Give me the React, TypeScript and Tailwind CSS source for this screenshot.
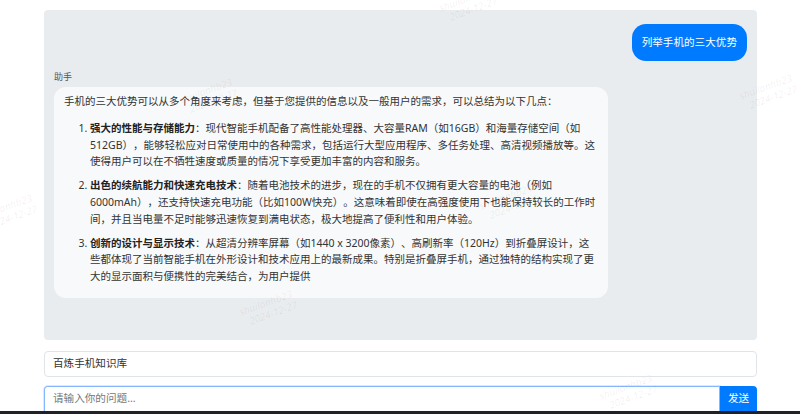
import React from 'react'

const FONT = '"Noto Sans", "Noto Sans CJK SC", sans-serif'

const ITEMS = [
  {
    title: '强大的性能与存储能力',
    body: '：现代智能手机配备了高性能处理器、大容量RAM（如16GB）和海量存储空间（如512GB），能够轻松应对日常使用中的各种需求，包括运行大型应用程序、多任务处理、高清视频播放等。这使得用户可以在不牺牲速度或质量的情况下享受更加丰富的内容和服务。',
  },
  {
    title: '出色的续航能力和快速充电技术',
    body: '：随着电池技术的进步，现在的手机不仅拥有更大容量的电池（例如6000mAh），还支持快速充电功能（比如100W快充）。这意味着即使在高强度使用下也能保持较长的工作时间，并且当电量不足时能够迅速恢复到满电状态，极大地提高了便利性和用户体验。',
  },
  {
    title: '创新的设计与显示技术',
    body: '：从超清分辨率屏幕（如1440 x 3200像素）、高刷新率（120Hz）到折叠屏设计，这些都体现了当前智能手机在外形设计和技术应用上的最新成果。特别是折叠屏手机，通过独特的结构实现了更大的显示面积与便携性的完美结合，为用户提供',
  },
]

// faint watermark stamps over the page
const MARKS = [
  { x: 440, y: -8 },
  { x: 180, y: 84 },
  { x: 740, y: 80 },
  { x: 480, y: 190 },
  { x: -20, y: 200 },
  { x: 240, y: 296 },
  { x: 600, y: 380 },
]

export default function App() {
  return (
    <div
      className="relative w-[800px] h-[414px] overflow-hidden bg-white flex flex-col text-[#333] [text-spacing-trim:space-all]"
      style={{ fontFamily: FONT }}
    >
      {/* chat panel */}
      <div className="ml-[44px] mt-[10px] w-[713px] h-[330px] shrink-0 rounded-[4px] bg-[#e9ecef] px-[10px] pt-[14px] flex flex-col">
        <div className="flex justify-end">
          <div className="rounded-[14px] bg-[#007bff] px-[10px] py-[10px] text-[10.6px] leading-[17px] text-white">
            列举手机的三大优势
          </div>
        </div>

        <div className="mt-[11px] text-[9px] leading-[10px] text-[#555]">助手</div>

        <div className="mt-[5px] w-[554px] rounded-[12px] bg-[#f8f9fa] px-[10px] pt-[6px] pb-[13px] text-[10.5px] leading-[16.8px]">
          <p>手机的三大优势可以从多个角度来考虑，但基于您提供的信息以及一般用户的需求，可以总结为以下几点：</p>
          <ol className="mt-[10px] list-decimal pl-[26px] flex flex-col gap-[7px]">
            {ITEMS.map(it => (
              <li key={it.title}>
                <strong className="font-bold text-[#222]">{it.title}</strong>
                {it.body}
              </li>
            ))}
          </ol>
        </div>
      </div>

      {/* knowledge base */}
      <div className="ml-[44px] mt-[11px] w-[713px] h-[26px] shrink-0 rounded-[4px] border border-[#e1e4e8] bg-white px-[8px] flex items-center text-[10.6px]">
        百炼手机知识库
      </div>

      {/* input row */}
      <div className="ml-[44px] mt-[9px] w-[713px] h-[25px] shrink-0 flex">
        <div className="flex-1 rounded-tl-[4px] border border-[#86b7fe] border-b-0 shadow-[0_0_0_1px_rgba(13,110,253,0.15)] bg-white px-[8px] flex items-center text-[10.6px] text-[#777]">
          请输入你的问题...
        </div>
        <button className="w-[37px] rounded-tr-[4px] bg-[#007bff] text-white text-[10.6px] flex items-center justify-center">
          发送
        </button>
      </div>

      <div className="mt-auto h-[3px] bg-[#202124]" />

      {MARKS.map((m, i) => (
        <div
          key={i}
          className="pointer-events-none absolute -rotate-[20deg] text-[10px] leading-[12px] italic text-[rgba(0,0,0,0.07)]"
          style={{ left: m.x, top: m.y }}
        >
          <div>shuilanhb23</div>
          <div className="pl-[6px]">2024-12-27</div>
        </div>
      ))}
    </div>
  )
}
